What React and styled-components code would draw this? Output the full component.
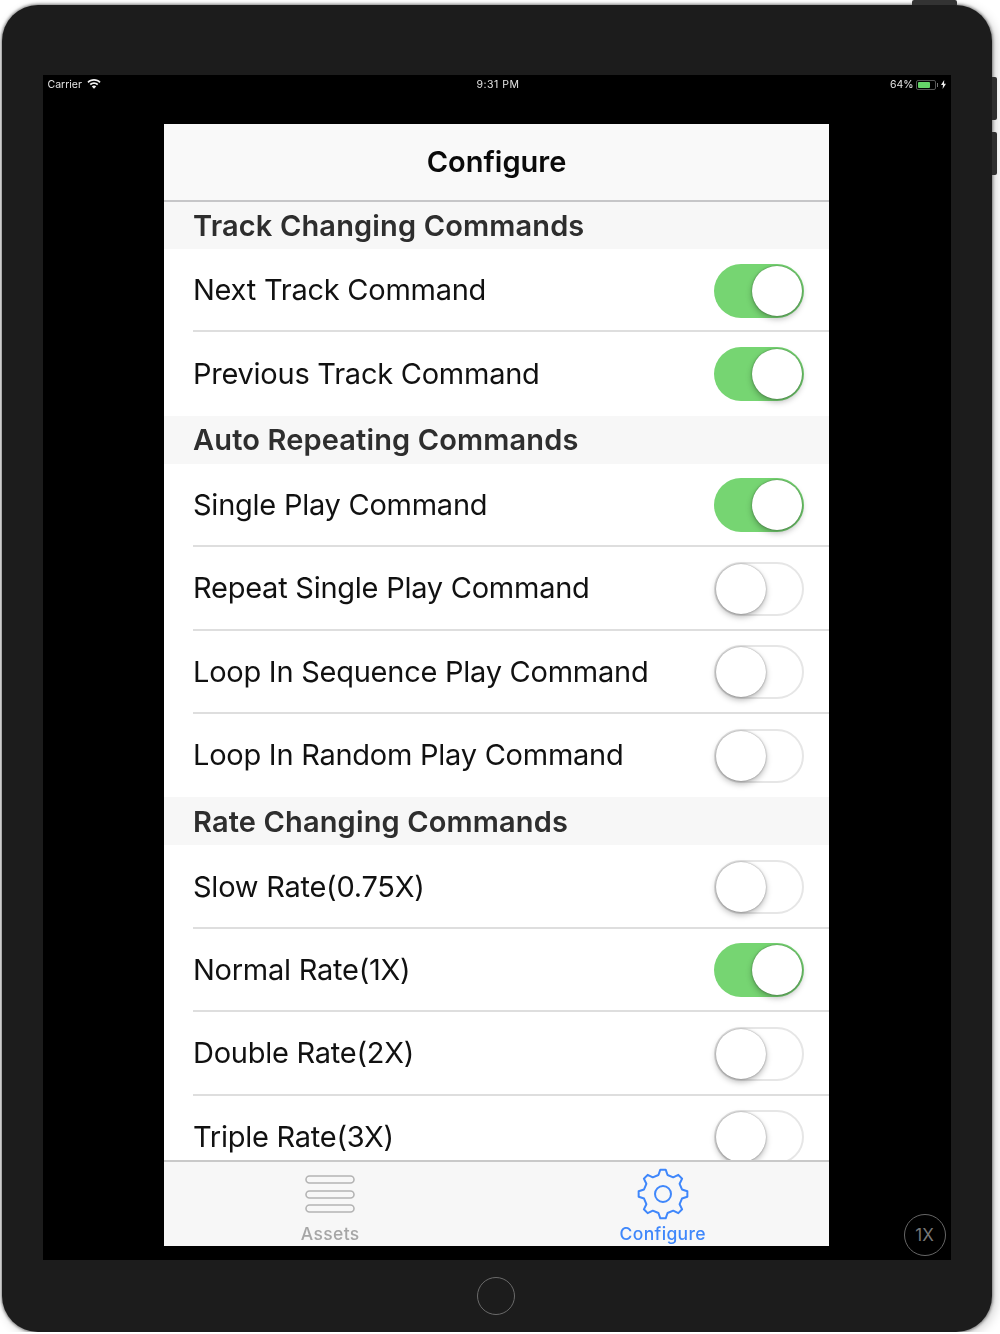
import React from 'react'
import styled, { createGlobalStyle } from 'styled-components'

const sections = [
  {
    title: 'Track Changing Commands',
    rows: [
      { label: 'Next Track Command', on: true },
      { label: 'Previous Track Command', on: true },
    ],
  },
  {
    title: 'Auto Repeating Commands',
    rows: [
      { label: 'Single Play Command', on: true },
      { label: 'Repeat Single Play Command', on: false },
      { label: 'Loop In Sequence Play Command', on: false },
      { label: 'Loop In Random Play Command', on: false },
    ],
  },
  {
    title: 'Rate Changing Commands',
    rows: [
      { label: 'Slow Rate(0.75X)', on: false },
      { label: 'Normal Rate(1X)', on: true },
      { label: 'Double Rate(2X)', on: false },
      { label: 'Triple Rate(3X)', on: false },
    ],
  },
]

// 8 tooth gear outline
const gearPath = () => {
  const teeth = 8
  const points = []
  for (let i = 0; i < teeth; i++) {
    const a = (i / teeth) * Math.PI * 2 - Math.PI / 2
    const step = (Math.PI * 2) / teeth
    const at = (r, d) => [
      (30 + r * Math.cos(a + d * step)).toFixed(2),
      (30 + r * Math.sin(a + d * step)).toFixed(2),
    ]
    points.push(at(19.5, -0.3), at(24.5, -0.14), at(24.5, 0.14), at(19.5, 0.3))
  }
  return 'M' + points.map((p) => p.join(' ')).join('L') + 'Z'
}

const App = () => {
  return (
    <>
      <GlobalStyle />
      <Page>
        <TopButton />
        <VolumeUp />
        <VolumeDown />
        <Screen>
          <StatusBar>
            <StatusLeft>
              Carrier
              <svg width="14" height="10" viewBox="0 0 14 10" fill="#f2f2f2">
                <path d="M7 0C4.4 0 2.1 1 .4 2.7l1.2 1.2C3 2.5 4.9 1.7 7 1.7s4 .8 5.4 2.2l1.2-1.2C11.900 1 9.600 0 7 0z" />
                <path d="M7 3.300c-1.700 0-3.200.7-4.300 1.800l1.200 1.200C4.700 5.500 5.800 5 7 5s2.300.5 3.100 1.300l1.200-1.200C10.200 4 8.700 3.300 7 3.300z" />
                <path d="M7 6.500c-.9 0-1.600.3-2.200.9L7 9.700l2.200-2.300C8.600 6.800 7.900 6.500 7 6.500z" />
              </svg>
            </StatusLeft>
            <StatusTime>9:31 PM</StatusTime>
            <StatusRight>
              64%
              <Battery>
                <BatteryFill />
              </Battery>
              <svg width="5" height="9" viewBox="0 0 5 9" fill="#eee">
                <path d="M3.200 0 0 5h2L1.600 9 5 3.800H3z" />
              </svg>
            </StatusRight>
          </StatusBar>
          <Sheet>
            <NavBar>Configure</NavBar>
            <List>
              {sections.map((section) => (
                <section key={section.title}>
                  <SectionHeader>{section.title}</SectionHeader>
                  {section.rows.map((row, i) => (
                    <Row key={row.label}>
                      <RowInner $last={i === section.rows.length - 1}>
                        <RowLabel>{row.label}</RowLabel>
                        <Switch $on={row.on}>
                          <Knob $on={row.on} />
                        </Switch>
                      </RowInner>
                    </Row>
                  ))}
                </section>
              ))}
            </List>
            <TabBar>
              <Tab>
                <TabIcon>
                  <svg width="52" height="42" viewBox="0 0 52 42" fill="none" stroke="#b4b4b4" strokeWidth="1.6">
                    <rect x="2" y="3" width="48" height="7" rx="3.500" />
                    <rect x="2" y="18" width="48" height="7" rx="3.500" />
                    <rect x="2" y="32" width="48" height="7" rx="3.500" />
                  </svg>
                </TabIcon>
                <TabLabel>Assets</TabLabel>
              </Tab>
              <Tab $active>
                <TabIcon>
                  <svg width="52" height="52" viewBox="4 4 52 52" fill="none" stroke="#3f87fb" strokeWidth="2" strokeLinejoin="round">
                    <path d={gearPath()} />
                    <circle cx="30" cy="30" r="8" />
                  </svg>
                </TabIcon>
                <TabLabel>Configure</TabLabel>
              </Tab>
            </TabBar>
          </Sheet>
          <ScaleBadge>1X</ScaleBadge>
        </Screen>
        <HomeButton />
      </Page>
    </>
  )
}

const GlobalStyle = createGlobalStyle`
  html, body {
    margin: 0;
    padding: 0;
    background: #fff;
  }
  body {
    font-family: Inter, "Liberation Sans", sans-serif;
  }
`

const Page = styled.div`
  position: relative;
  box-sizing: border-box;
  width: 990px;
  height: 1327px;
  margin: 5px 0 0 2px;
  padding-top: 70px;
  display: flex;
  flex-direction: column;
  align-items: center;
  background: #1c1c1c;
  border-radius: 36px;
  box-shadow: 0 0 3px 1px rgba(0, 0, 0, 0.45), 3px 3px 12px rgba(0, 0, 0, 0.2);
`

const TopButton = styled.div`
  position: absolute;
  top: -5px;
  left: 910px;
  width: 45px;
  height: 5px;
  background: #333;
  border-radius: 2px 2px 0 0;
`

const VolumeUp = styled.div`
  position: absolute;
  top: 72px;
  right: -5px;
  width: 5px;
  height: 43px;
  background: #2e2e2e;
  border-radius: 0 2px 2px 0;
`

const VolumeDown = styled(VolumeUp)`
  top: 127px;
`

const Screen = styled.div`
  position: relative;
  width: 908px;
  height: 1185px;
  margin-left: -1px;
  display: flex;
  flex-direction: column;
  align-items: center;
  background: #000;
`

const StatusBar = styled.div`
  box-sizing: border-box;
  width: 100%;
  height: 19px;
  padding: 0 5px;
  display: grid;
  grid-template-columns: 1fr auto 1fr;
  align-items: center;
  color: #e4e4e4;
  font-size: 10.5px;
  filter: blur(0.3px);
`

const StatusLeft = styled.div`
  display: flex;
  align-items: center;
  gap: 5px;
  svg {
    margin-top: -2px;
  }
`

const StatusTime = styled.div`
  margin-left: 3px;
  letter-spacing: 0.5px;
`

const StatusRight = styled.div`
  display: flex;
  align-items: center;
  justify-content: flex-end;
  gap: 3px;
`

const Battery = styled.div`
  position: relative;
  box-sizing: border-box;
  width: 20px;
  height: 10px;
  margin: 0 2px 0 -1px;
  padding: 1px;
  border: 1px solid #555;
  border-radius: 2px;

  &::after {
    content: '';
    position: absolute;
    top: 2px;
    right: -3px;
    width: 1px;
    height: 4px;
    background: #777;
  }
`

const BatteryFill = styled.div`
  width: 12px;
  height: 100%;
  background: #65d368;
  border-radius: 1px;
`

const Sheet = styled.div`
  width: 665px;
  height: 1122px;
  margin-top: 30px;
  display: flex;
  flex-direction: column;
  overflow: hidden;
  background: #fff;
  filter: blur(0.35px);
`

const NavBar = styled.div`
  flex: none;
  box-sizing: border-box;
  height: 78px;
  padding-bottom: 1px;
  display: flex;
  align-items: center;
  justify-content: center;
  background: #f9f9f9;
  border-bottom: 2px solid #c6c6c8;
  color: #0a0a0a;
  font-size: 29px;
  font-weight: 600;
`

const List = styled.div`
  flex: 1;
  min-height: 0;
  overflow: hidden;
`

const SectionHeader = styled.div`
  height: 48px;
  padding-left: 29px;
  display: flex;
  align-items: center;
  background: #f7f7f7;
  color: #2e2e2e;
  font-size: 29px;
  font-weight: 600;
  letter-spacing: 0.14px;

  section:first-child & {
    height: 47px;
  }
`

const Row = styled.div`
  padding-left: 29px;
  background: #fff;
`

const RowInner = styled.div`
  box-sizing: border-box;
  height: 83.4px;
  padding-right: 25px;
  display: flex;
  align-items: center;
  justify-content: space-between;
  border-bottom: 2px solid ${(p) => (p.$last ? 'transparent' : '#dedede')};
`

const RowLabel = styled.span`
  color: #111;
  font-size: 29px;
  letter-spacing: -0.25px;
`

const Switch = styled.div`
  position: relative;
  box-sizing: border-box;
  flex: none;
  width: 90px;
  height: 54px;
  margin-top: 2px;
  border-radius: 27px;
  background: ${(p) => (p.$on ? '#76d572' : '#fff')};
  border: ${(p) => (p.$on ? 'none' : '2px solid #e6e6e6')};
`

const Knob = styled.div`
  position: absolute;
  top: ${(p) => (p.$on ? '2px' : '0')};
  left: ${(p) => (p.$on ? '38px' : '0')};
  width: 50px;
  height: 50px;
  border-radius: 50%;
  background: #fff;
  box-shadow: 0 3px 6px rgba(0, 0, 0, 0.28), 0 0 2px rgba(0, 0, 0, 0.4);
`

const TabBar = styled.div`
  flex: none;
  box-sizing: border-box;
  height: 86px;
  display: grid;
  grid-template-columns: 1fr 1fr;
  background: #f7f7f7;
  border-top: 2px solid #c9c9c9;
`

const Tab = styled.div`
  display: flex;
  flex-direction: column;
  align-items: center;
  padding-top: 6px;
  color: ${(p) => (p.$active ? '#3f87fb' : '#a6a6a6')};
`

const TabIcon = styled.div`
  height: 52px;
  margin-bottom: 3px;
  display: flex;
  align-items: center;
`

const TabLabel = styled.div`
  font-size: 17.500px;
  font-weight: 500;
  line-height: 22px;
  letter-spacing: 0.35px;
`

const ScaleBadge = styled.div`
  position: absolute;
  right: 5px;
  bottom: 4px;
  box-sizing: border-box;
  width: 42px;
  height: 42px;
  display: flex;
  align-items: center;
  justify-content: center;
  border: 1.500px solid #666;
  border-radius: 50%;
  color: #777;
  font-size: 17px;
`

const HomeButton = styled.div`
  box-sizing: border-box;
  width: 38px;
  height: 38px;
  margin-top: 17px;
  margin-left: -2px;
  border: 1.500px solid #6a6a6a;
  border-radius: 50%;
`

export default App
